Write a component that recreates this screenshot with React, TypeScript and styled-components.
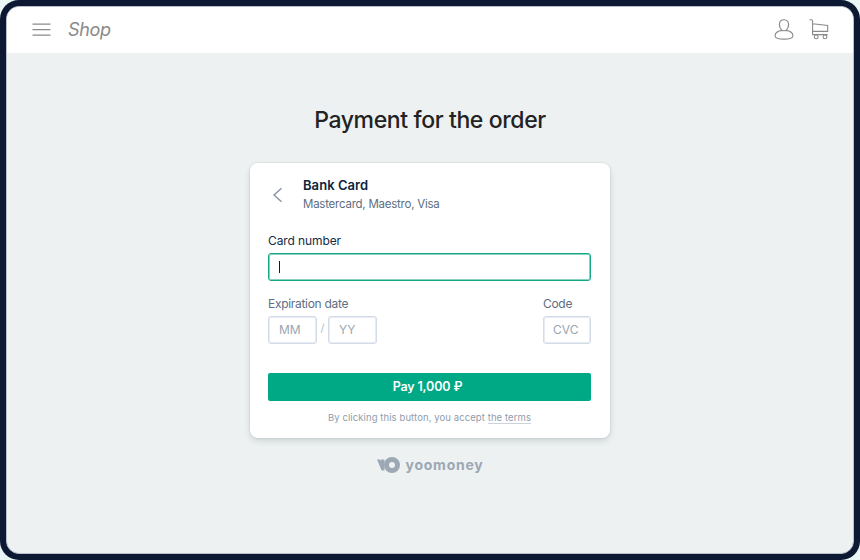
import React from "react";
import styled, { createGlobalStyle } from "styled-components";

const Global = createGlobalStyle`
  * { box-sizing: border-box; }
  body { margin: 0; background: #eaf6f5; font-family: Inter, "Liberation Sans", sans-serif; }
  button, input { font-family: inherit; }
`;

const Device = styled.div`
  width: 860px;
  height: 560px;
  padding: 6px;
  background: #0d1833;
  border-radius: 19px;
  overflow: hidden;
`;

const Screen = styled.div`
  height: 548px;
  background: #edf1f2;
  border: 1px solid #b9bfca;
  border-radius: 13px;
  overflow: hidden;
`;

const Header = styled.header`
  display: flex;
  align-items: center;
  height: 46px;
  padding: 0 24px 0 25px;
  background: #fff;
  color: #8a8a8a;
`;

const Brand = styled.span`
  margin-left: 17px;
  font-size: 18px;
  line-height: 24px;
  font-style: italic;
  font-weight: 400;
  letter-spacing: -0.3px;
`;

const Actions = styled.div`
  display: flex;
  gap: 15px;
  margin-left: auto;
`;

const Icon = styled.svg`
  display: block;
  fill: none;
  stroke: currentColor;
`;

const Main = styled.main`
  display: flex;
  flex-direction: column;
  align-items: center;
  padding-top: 51px;
`;

const Title = styled.h1`
  margin: 0;
  font-size: 23px;
  line-height: 32px;
  font-weight: 500;
  letter-spacing: -0.38px;
  color: #222;
  white-space: nowrap;
`;

const Card = styled.section`
  width: 360px;
  height: 275px;
  margin-top: 27px;
  padding: 14px 19px 0 18px;
  background: #fff;
  border-radius: 8px;
  box-shadow: 0 0 1px 1px rgba(40, 40, 40, 0.05), 0 3px 6px rgba(20, 40, 40, 0.14);
`;

const Method = styled.div`
  display: flex;
  align-items: center;
  height: 36px;
  padding-left: 4px;
  color: #8593a5;
`;

const MethodText = styled.div`
  margin-left: 19px;
`;

const MethodName = styled.div`
  margin-top: -2px;
  font-size: 13px;
  line-height: 19px;
  font-weight: 600;
  letter-spacing: 0.05px;
  color: #0b2440;
`;

const MethodHint = styled.div`
  font-size: 11.5px;
  line-height: 18px;
  letter-spacing: -0.24px;
  color: #5d6e82;
`;

const Label = styled.label<{ $active?: boolean }>`
  display: block;
  font-size: 12px;
  line-height: 16px;
  letter-spacing: ${(p) => (p.$active ? "-0.1px" : "-0.3px")};
  white-space: nowrap;
  color: ${(p) => (p.$active ? "#142b44" : "#5d6e82")};
`;

const NumberGroup = styled.div`
  margin-top: 20px;
`;

const NumberField = styled.div`
  display: flex;
  align-items: center;
  height: 28px;
  margin-top: 4px;
  padding-left: 10px;
  border: 1px solid #12a886;
  border-radius: 3px;
  box-shadow: inset 0 0 0 1px rgba(18, 168, 134, 0.5);
`;

const Caret = styled.span`
  width: 1px;
  height: 12px;
  background: #0b1c35;
`;

const Details = styled.div`
  display: flex;
  justify-content: space-between;
  margin-top: 15px;
`;

const CodeGroup = styled.div`
  width: 48px;
`;

const DateFields = styled.div`
  display: flex;
  align-items: center;
`;

const Slash = styled.span`
  width: 11px;
  text-align: center;
  font-size: 11px;
  color: #b5bec9;
`;

const ShortInput = styled.input`
  display: block;
  width: 49px;
  height: 28px;
  margin: 4px 0 0;
  padding: 0 0 1px 10px;
  border: 1px solid #d3dae8;
  border-radius: 3px;
  box-shadow: inset 0 0 0 1px rgba(211, 218, 232, 0.55);
  background: #fff;
  font-size: 12px;
  outline: none;
  ${CodeGroup} & { width: 48px; padding-left: 9px; }
  &::placeholder { color: #9aa5b2; opacity: 1; }
`;

const PayButton = styled.button`
  display: block;
  width: 100%;
  height: 28px;
  margin: 29px 0 0;
  padding: 0 4px 1px 0;
  border: 0;
  border-radius: 2px;
  background: #00a986;
  color: #fff;
  font-size: 12.5px;
  font-weight: 600;
  letter-spacing: -0.15px;
`;

const Terms = styled.p`
  margin: 10px 0 0;
  font-size: 9.5px;
  line-height: 14px;
  letter-spacing: 0.09px;
  text-align: center;
  white-space: nowrap;
  color: #909dac;
`;

const TermsLink = styled.span`
  display: inline-block;
  line-height: 11px;
  border-bottom: 1px solid #cbd2da;
`;

const Logo = styled.div`
  display: flex;
  align-items: center;
  gap: 6px;
  margin-top: 19px;
  color: #9ca8b4;
`;

const LogoName = styled.span`
  margin-top: -1px;
  font-size: 14px;
  line-height: 16px;
  font-weight: 700;
  letter-spacing: 0.75px;
`;

export default function App() {
  return (
    <>
      <Global />
      <Device>
        <Screen>
          <Header>
            <Icon width="19" height="14" viewBox="0 0 19 14" strokeWidth="1.2">
              <path d="M.5 1.2h18M.5 6.700h18M.5 12.200h18" />
            </Icon>
            <Brand>Shop</Brand>
            <Actions>
              <Icon width="20" height="22" viewBox="0 0 20 22" strokeWidth="1.1">
                <path d="M10 .8C7 .8 5.400 2.800 5.400 5.600c0 2.700 1.200 4.700 2.700 5.800C3.600 12 1.100 14.200 1.100 16.700c0 2.300 3.700 3.400 8.900 3.400s8.900-1.100 8.900-3.400c0-2.500-2.500-4.700-7-5.300 1.500-1.100 2.700-3.100 2.700-5.800C14.600 2.800 13 .8 10 .8ZM8.100 11.400q1.900.7 3.800 0" />
              </Icon>
              <Icon width="20" height="22" viewBox="0 0 20 22" strokeWidth="1.1">
                <path d="M.5.800h1.800q1.300.1 1.300 1.600v13.200h15M3.700 4.700l15 1.800v5.900H3.700" />
                <circle cx="7.200" cy="17.900" r="1.900" />
                <circle cx="16" cy="17.900" r="1.900" />
              </Icon>
            </Actions>
          </Header>
          <Main>
            <Title>Payment for the order</Title>
            <Card>
              <Method>
                <Icon width="12" height="16" viewBox="0 0 12 16" strokeWidth="1.4">
                  <path d="M9.500 1.200 2 8l7.500 6.800" />
                </Icon>
                <MethodText>
                  <MethodName>Bank Card</MethodName>
                  <MethodHint>Mastercard, Maestro, Visa</MethodHint>
                </MethodText>
              </Method>
              <NumberGroup>
                <Label $active>Card number</Label>
                <NumberField>
                  <Caret />
                </NumberField>
              </NumberGroup>
              <Details>
                <div>
                  <Label>Expiration date</Label>
                  <DateFields>
                    <ShortInput placeholder="MM" />
                    <Slash>/</Slash>
                    <ShortInput placeholder="YY" />
                  </DateFields>
                </div>
                <CodeGroup>
                  <Label>Code</Label>
                  <ShortInput placeholder="CVC" />
                </CodeGroup>
              </Details>
              <PayButton>Pay 1,000 ₽</PayButton>
              <Terms>
                By clicking this button, you accept <TermsLink>the terms</TermsLink>
              </Terms>
            </Card>
            <Logo>
              <svg width="23" height="16" viewBox="0 0 23 16" fill="currentColor">
                <path d="M0 2.600h3.200l.7 1.600V2.600h3.600v11H4.600Z" />
                <path fillRule="evenodd" d="M15 0a8 8 0 1 0 0 16 8 8 0 0 0 0-16Zm0 5a3 3 0 1 1 0 6 3 3 0 0 1 0-6Z" />
              </svg>
              <LogoName>yoomoney</LogoName>
            </Logo>
          </Main>
        </Screen>
      </Device>
    </>
  );
}
